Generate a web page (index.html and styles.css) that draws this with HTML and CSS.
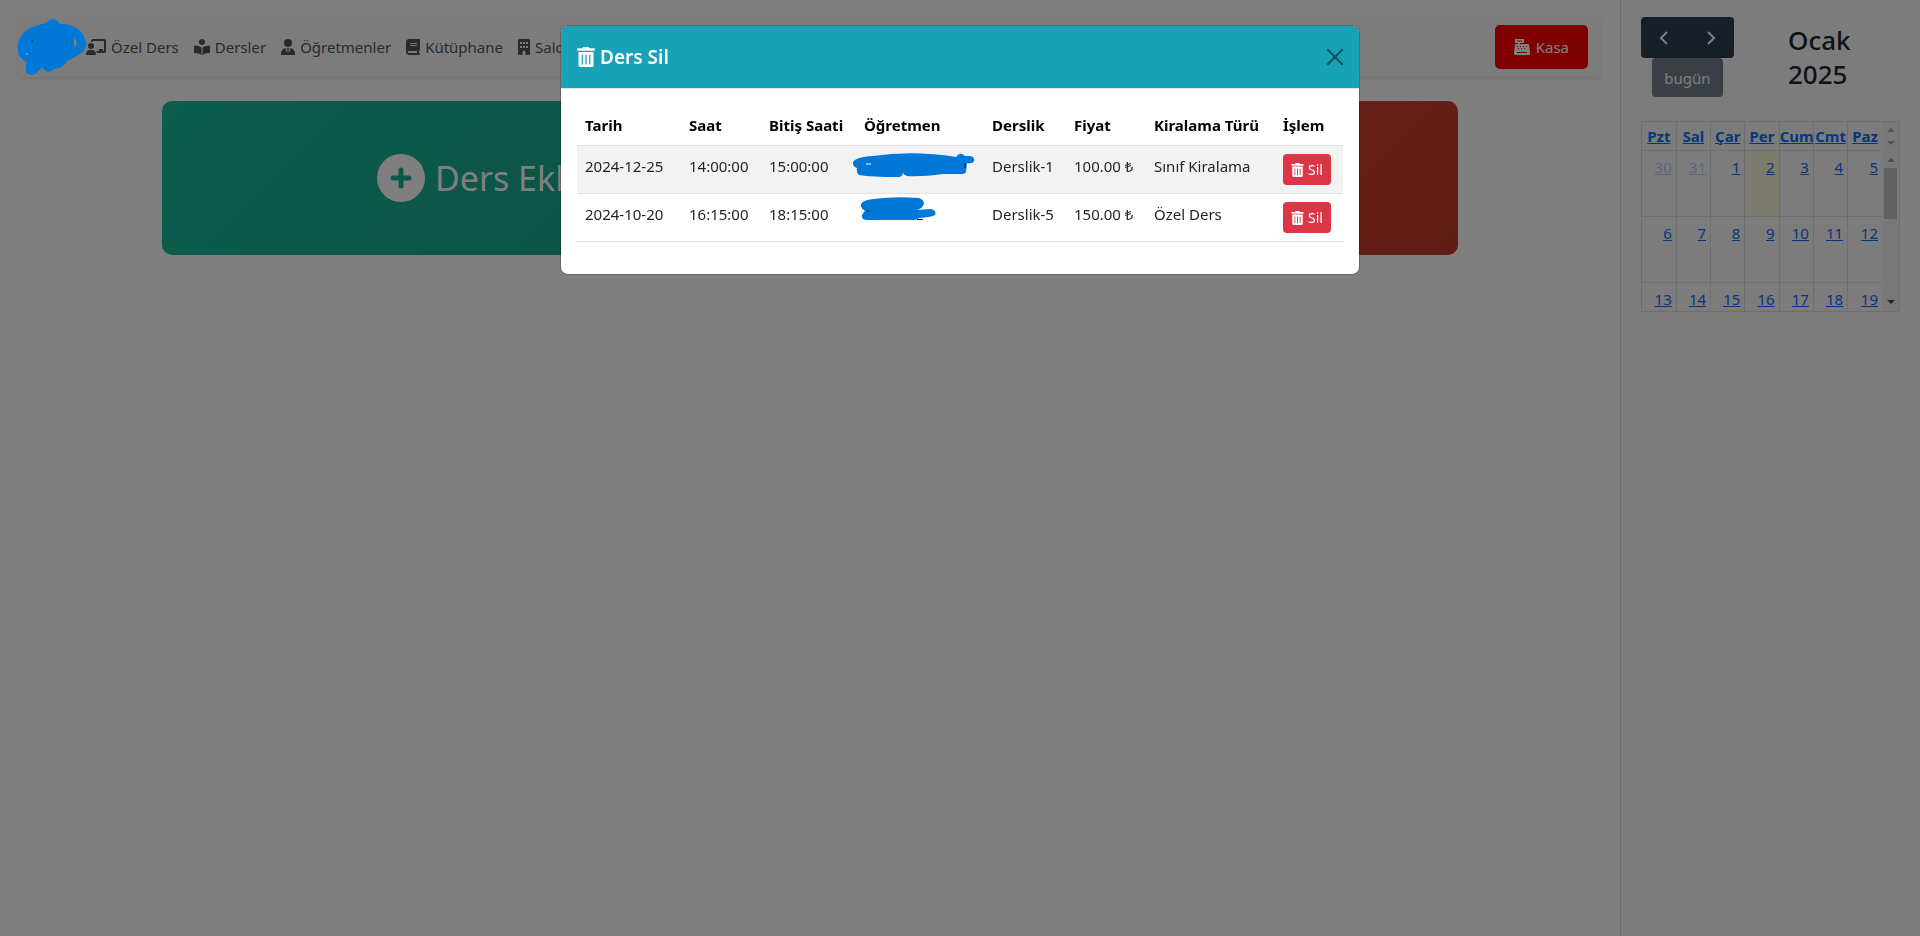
FILE: index.html
```html
<!DOCTYPE html>
<html lang="tr">
<head>
<meta charset="utf-8">
<title>Ders Sil</title>
<link rel="stylesheet" href="styles.css">
</head>
<body>
<svg class="sprite" aria-hidden="true">
  <symbol id="trash" viewBox="0 0 448 512"><path d="M32 464a48 48 0 0 0 48 48h288a48 48 0 0 0 48-48V128H32zm272-256a16 16 0 0 1 32 0v224a16 16 0 0 1-32 0zm-96 0a16 16 0 0 1 32 0v224a16 16 0 0 1-32 0zm-96 0a16 16 0 0 1 32 0v224a16 16 0 0 1-32 0zM432 32H312l-9.4-18.7A24 24 0 0 0 281.1 0H166.8a23.72 23.72 0 0 0-21.4 13.3L136 32H16A16 16 0 0 0 0 48v32a16 16 0 0 0 16 16h416a16 16 0 0 0 16-16V48a16 16 0 0 0-16-16z"/></symbol>
</svg>
<div class="page">
  <main class="main">
    <nav class="navbar">
      <a class="brand" href="#" aria-label="Ana sayfa">
        <svg class="brand-mark" viewBox="0 0 68 56"><path fill="#0078d7" fill-rule="evenodd" d="M29 4C31-1 39-1 42 5C56 5 66 11 68 24C68 34 57 38 49 42C46 48 40 50 36 50C33 54 27 54 24 48C20 53 16 58 10 55C6 52 8 46 9 43C1 40-1 33 0 25C2 13 14 6 29 4zM56 19V28Q62 24 56 19z"/><path fill="#12507f" d="M13 22l2-2v3l-2 1z"/><circle cx="9" cy="35" r="1" fill="#6aa6d8"/></svg>
      </a>
      <a class="nav-link" href="#"><svg class="icon icon-wide" viewBox="0 0 20 16"><circle cx="5" cy="7" r="3"/><path d="M0 16q0-5 4-5h2q4 0 4 5zM5 2q0-2 2-2h11q2 0 2 2v10q0 2-2 2h-7l-1-2h3v-2h4v2h1V2H7v1H5z"/></svg>Özel Ders</a>
      <a class="nav-link" href="#"><svg class="icon" viewBox="0 0 16 16"><circle cx="8" cy="3" r="3"/><path d="M0 6.500q5 0 7.500 2V16Q5 14 0 14zM16 6.500q-5 0-7.500 2V16Q11 14 16 14z"/></svg>Dersler</a>
      <a class="nav-link" href="#"><svg class="icon icon-narrow" viewBox="0 0 14 16"><circle cx="7" cy="4" r="4"/><path fill-rule="evenodd" d="M0 16q0-6 4-6.500h6q4 .5 4 6.500zM4.500 10L6 14l.6-2.600L5.800 10zM9.500 10L8 14l-.6-2.600L8.200 10z"/></svg>Öğretmenler</a>
      <a class="nav-link" href="#"><svg class="icon icon-narrow" viewBox="0 0 448 512"><path d="M96 0C43 0 0 43 0 96V416c0 53 43 96 96 96H384h32c17.700 0 32-14.300 32-32s-14.300-32-32-32V384c17.700 0 32-14.300 32-32V32c0-17.700-14.300-32-32-32H384 96zm0 384H352v64H96c-17.700 0-32-14.300-32-32s14.300-32 32-32zm32-240c0-8.800 7.200-16 16-16H336c8.800 0 16 7.200 16 16s-7.200 16-16 16H144c-8.800 0-16-7.200-16-16zm16 48H336c8.800 0 16 7.200 16 16s-7.200 16-16 16H144c-8.800 0-16-7.200-16-16s7.200-16 16-16z"/></svg>Kütüphane</a>
      <a class="nav-link" href="#"><svg class="icon icon-slim" viewBox="0 0 12 16"><path fill-rule="evenodd" d="M0 1.500Q0 0 1.500 0h9Q12 0 12 1.500v13q0 1.500-1.500 1.500H7.500v-3q0-1.500-1.500-1.500T4.500 13v3h-3Q0 16 0 14.500zM2 3v2h2V3zm3 0v2h2V3zm3 0v2h2V3zM2 7v2h2V7zm3 0v2h2V7zm3 0v2h2V7z"/></svg>Salonlar</a>
      <button class="kasa" type="button"><svg class="icon" viewBox="0 0 16 16"><path fill-rule="evenodd" d="M1 0h9v4H6v1h8q1 0 1 1l1 6v3q0 1-1 1H1q-1 0-1-1v-3l1-6q0-1 1-1h2V4H1zM3 1.500v1h5v-1zM3 7v1h1V7zm3 0v1h1V7zm3 0v1h1V7zm3 0v1h1V7zM4 9v1h1V9zm3 0v1h1V9zm3 0v1h1V9zM3 13v1h10v-1z"/></svg>Kasa</button>
    </nav>
    <div class="cards">
      <button class="card card-add" type="button"><svg class="card-icon" viewBox="0 0 48 48"><circle cx="24" cy="24" r="24"/><path class="card-plus" d="M24 16v16M16 24h16"/></svg>Ders Ekle</button>
      <button class="card card-delete" type="button"><svg class="card-icon"><use href="#trash"/></svg>Ders Sil</button>
    </div>
  </main>
  <aside class="sidebar">
    <div class="toolbar">
      <div class="toolbar-buttons">
        <div class="arrows">
          <button type="button" aria-label="Önceki"><svg viewBox="0 0 10 16"><path d="M8 2L2 8l6 6"/></svg></button>
          <button type="button" aria-label="Sonraki"><svg viewBox="0 0 10 16"><path d="M2 2l6 6-6 6"/></svg></button>
        </div>
        <button class="today-button" type="button" disabled>bugün</button>
      </div>
      <h2 class="month">Ocak 2025</h2>
    </div>
    <div class="calendar">
      <table class="days">
        <thead><tr><th><a href="#">Pzt</a></th><th><a href="#">Sal</a></th><th><a href="#">Çar</a></th><th><a href="#">Per</a></th><th><a href="#">Cum</a></th><th><a href="#">Cmt</a></th><th><a href="#">Paz</a></th></tr></thead>
        <tbody>
          <tr><td class="other"><a href="#">30</a></td><td class="other"><a href="#">31</a></td><td><a href="#">1</a></td><td class="today"><a href="#">2</a></td><td><a href="#">3</a></td><td><a href="#">4</a></td><td><a href="#">5</a></td></tr>
          <tr><td><a href="#">6</a></td><td><a href="#">7</a></td><td><a href="#">8</a></td><td><a href="#">9</a></td><td><a href="#">10</a></td><td><a href="#">11</a></td><td><a href="#">12</a></td></tr>
          <tr class="cut"><td><a href="#">13</a></td><td><a href="#">14</a></td><td><a href="#">15</a></td><td><a href="#">16</a></td><td><a href="#">17</a></td><td><a href="#">18</a></td><td><a href="#">19</a></td></tr>
        </tbody>
      </table>
      <div class="scrollbars" aria-hidden="true">
        <div class="scroll-head"><i class="up"></i><i class="down"></i></div>
        <div class="scroll-body"><i class="up"></i><span class="thumb"></span><i class="down active"></i></div>
      </div>
    </div>
  </aside>
</div>
<div class="backdrop">
  <section class="modal" role="dialog" aria-modal="true" aria-labelledby="modal-title">
    <header class="modal-header">
      <h5 class="modal-title" id="modal-title"><svg class="title-icon"><use href="#trash"/></svg>Ders Sil</h5>
      <button class="close" type="button" aria-label="Kapat"><svg viewBox="0 0 16 16"><path d="M1 1l14 14M15 1L1 15"/></svg></button>
    </header>
    <div class="modal-body">
      <table class="lessons">
        <colgroup><col class="c-date"><col class="c-time"><col class="c-end"><col class="c-teacher"><col class="c-room"><col class="c-price"><col class="c-type"><col></colgroup>
        <thead><tr><th>Tarih</th><th>Saat</th><th>Bitiş Saati</th><th>Öğretmen</th><th>Derslik</th><th>Fiyat</th><th>Kiralama Türü</th><th>İşlem</th></tr></thead>
        <tbody>
          <tr class="odd"><td>2024-12-25</td><td>14:00:00</td><td>15:00:00</td>
            <td class="teacher"><svg class="scribble scribble-long" viewBox="0 0 122 25"><path fill="#0078d7" d="M20 4Q60-2 103 5Q107-1 112 4H117Q122 5 121 9Q120 12 114 11L113 20Q112 22 108 22H90Q68 25 54 24Q51 23 50 21Q49 26 43 25Q20 25 6 23Q3 20 4 16Q-1 14 0 10Q3 5 20 4z"/><path stroke="#fff" d="M13 12h5"/><path stroke="#111" d="M112 11v5"/></svg></td>
            <td>Derslik-1</td><td>100.00 ₺</td><td>Sınıf Kiralama</td><td><button class="delete" type="button"><svg><use href="#trash"/></svg>Sil</button></td></tr>
          <tr><td>2024-10-20</td><td>16:15:00</td><td>18:15:00</td>
            <td class="teacher"><svg class="scribble scribble-short" viewBox="0 0 75 24"><path fill="#0078d7" d="M12 2Q35-1 58 1Q65 4 62 9Q60 12 55 13L70 12Q76 14 74 18Q71 20 58 21L54 23H5Q0 22 1 18Q2 16 4 14Q-1 11 0 7Q2 3 12 2z"/><path stroke="#111" stroke-width="1" d="M56 22.500h6M7 13v2"/></svg></td>
            <td>Derslik-5</td><td>150.00 ₺</td><td>Özel Ders</td><td><button class="delete" type="button"><svg><use href="#trash"/></svg>Sil</button></td></tr>
        </tbody>
      </table>
    </div>
  </section>
</div>
</body>
</html>
```
FILE: styles.css
```css
* { box-sizing: border-box; }
body { margin: 0; background: #fff; color: #212529; font: 15px/24px "Noto Sans", "Open Sans", sans-serif; }
button { border: 0; font: inherit; color: inherit; cursor: pointer; }
svg { display: block; fill: currentColor; flex: none; }
table { border-collapse: collapse; table-layout: fixed; width: 100%; }
.sprite { display: none; }

.page { display: flex; min-height: 100vh; }
.main { flex: 1; padding: 17px 0 20px; }
.navbar { display: flex; align-items: center; gap: 15px; height: 60px; margin: 0 20px 0 18px; padding-right: 12px; background: #f8f9fa; box-shadow: 0 2px 4px rgba(0, 0, 0, .1); }
.brand { position: relative; z-index: 2; margin-right: -15px; }
.brand-mark { width: 68px; height: 56px; }
.nav-link { display: flex; align-items: center; gap: 5px; color: #555; text-decoration: none; }
.icon { width: 16px; height: 16px; }
.icon-wide { width: 20px; }
.icon-narrow { width: 14px; }
.icon-slim { width: 12px; }
.kasa { display: flex; align-items: center; gap: 6px; height: 44px; margin-left: auto; padding: 0 19px; border-radius: 5px; background: red; color: #fff; }

.cards { display: grid; grid-template-columns: 1fr 1fr; gap: 24px; width: 80%; margin: 24px auto 0; }
.card { display: flex; align-items: center; justify-content: center; gap: 10px; height: 154px; border-radius: 10px; color: #fff; font-size: 34px; line-height: 54px; }
.card-add { background: linear-gradient(135deg, #1abc9c, #16a085); }
.card-delete { background: linear-gradient(135deg, #e74c3c, #c0392b); }
.card-icon { width: 48px; height: 48px; }
.card-plus { fill: none; stroke: #18ae90; stroke-width: 5; stroke-linecap: round; }

.sidebar { width: 300px; padding: 17px 20px; border-left: 1px solid #ddd; background: #f8f9fa; }
.toolbar { display: flex; align-items: center; gap: 54px; }
.toolbar-buttons { display: flex; flex-direction: column; align-items: center; }
.arrows { display: flex; gap: 1px; border-radius: 4px; background: #2c3e50; color: #fff; }
.arrows button { display: grid; place-items: center; width: 46px; height: 41px; padding: 0; background: none; }
.arrows svg { width: 10px; height: 16px; fill: none; stroke: currentColor; stroke-width: 2; }
.today-button { height: 39px; padding: 0 12px; border-radius: 4px; background: #2c3e50; color: #fff; opacity: .65; }
.month { margin: 0; font-size: 26px; line-height: 34px; font-weight: 500; }
.calendar { display: flex; margin-top: 24px; border: 1px solid #ddd; }
.days { flex: 1; }
.days th, .days td { padding: 0; border: 1px solid #ddd; vertical-align: top; text-align: right; }
.days th { height: 28px; padding-top: 2px; text-align: center; font-weight: 700; }
.days tr > :first-child { border-left: 0; }
.days tr > :last-child { border-right: 0; }
.days thead th { border-top: 0; }
.days td { height: 66px; padding: 4px 4px 0 0; }
.days .cut td { height: 29px; border-bottom: 0; }
.days a { color: #0d6efd; }
.days .other a { opacity: .3; }
.days .today { background: #fbf6dc; }
.scrollbars { display: flex; flex-direction: column; width: 17px; background: #f1f1f1; }
.scroll-head, .scroll-body { display: flex; flex-direction: column; align-items: center; justify-content: space-between; }
.scroll-head { height: 29px; padding: 6px 0; }
.scroll-body { flex: 1; padding: 7px 0; justify-content: flex-start; }
.up, .down { border: 4px solid transparent; border-top: 0; border-bottom-color: #a3a3a3; }
.down { border-top: 4px solid #a3a3a3; border-bottom: 0; }
.down.active { margin-top: auto; border-top-color: #505050; }
.thumb { width: 13px; height: 51px; margin-top: 6px; background: #c1c1c1; }

.backdrop { position: fixed; inset: 0; z-index: 1; padding: 25px 16px; background: rgba(0, 0, 0, .5); }
.modal { max-width: 800px; margin: 0 auto; border: 1px solid rgba(0, 0, 0, .2); border-radius: 8px; background: #fff; background-clip: padding-box; overflow: hidden; }
.modal-header { display: flex; align-items: center; justify-content: space-between; padding: 16px; border-bottom: 1px solid #dee2e6; background: #17a2b8; color: #fff; }
.modal-title { display: flex; align-items: center; gap: 5px; margin: 0; font-size: 19px; line-height: 30px; font-weight: 600; }
.title-icon { width: 18px; height: 20px; }
.close { padding: 0; background: none; color: #000; opacity: .5; }
.close svg { width: 16px; height: 16px; stroke: currentColor; stroke-width: 2; stroke-linecap: round; }
.modal-body { padding: 16px 16px 32px; }
.lessons th, .lessons td { padding: 8px; border-bottom: 1px solid #dee2e6; text-align: left; vertical-align: top; white-space: nowrap; }
.lessons th { color: #000; font-weight: 700; }
.lessons .odd { background: #f2f2f2; }
.c-date { width: 104px; }
.c-time { width: 80px; }
.c-end { width: 95px; }
.c-teacher { width: 128px; }
.c-room { width: 82px; }
.c-price { width: 80px; }
.c-type { width: 129px; }
.lessons .teacher { position: relative; }
.scribble { position: absolute; fill: none; }
.scribble-long { top: 6px; left: -3px; width: 122px; height: 25px; }
.scribble-short { top: 3px; left: 5px; width: 75px; height: 24px; }
.delete { display: flex; align-items: center; gap: 4px; height: 31px; padding: 0 8px; border-radius: 4px; background: #dc3545; color: #fff; font-size: 14px; }
.delete svg { width: 13px; height: 14px; }
```
